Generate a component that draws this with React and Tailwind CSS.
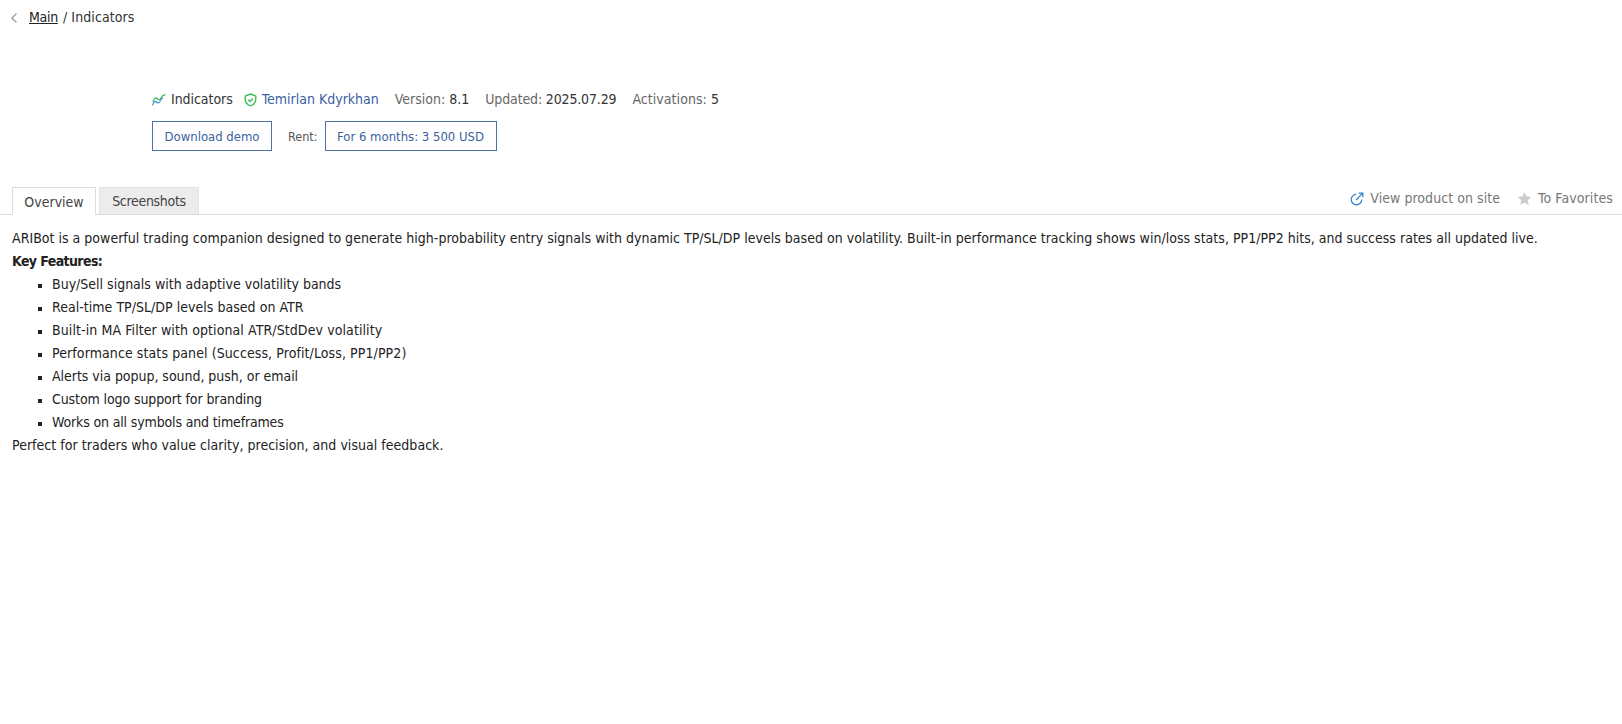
function Meta({ label, value, className }) {
  return (
    <span className={`text-[#666] ${className}`}>
      {label}: <span className="text-[#333]">{value}</span>
    </span>
  );
}

const features = [
  ["Buy/Sell signals with adaptive volatility bands", "tracking-[0px]"],
  ["Real-time TP/SL/DP levels based on ATR", "tracking-[0.03px]"],
  ["Built-in MA Filter with optional ATR/StdDev volatility", "tracking-[0.095px]"],
  ["Performance stats panel (Success, Profit/Loss, PP1/PP2)", "tracking-[0.095px]"],
  ["Alerts via popup, sound, push, or email", "tracking-[-0.03px]"],
  ["Custom logo support for branding", "tracking-[-0.1px]"],
  ["Works on all symbols and timeframes", "tracking-[-0.15px]"],
];

export default function App() {
  return (
    <div className="min-h-[724px] bg-white font-['DejaVu_Sans_Condensed','DejaVu_Sans',sans-serif] text-[14px] leading-[23px] text-[#222]">
      <nav className="flex h-[35px] items-center pl-[10px]">
        <svg width="8" height="12" viewBox="0 0 8 12" fill="none" stroke="#999" strokeWidth="1.2" className="mr-[11px]">
          <path d="M6.5 1.5 1.8 6l4.7 4.5" />
        </svg>
        <a className="tracking-[-0.3px] text-[#222] underline">Main</a>
        <span className="ml-[5px] tracking-[0.1px] text-[#333]">/ Indicators</span>
      </nav>

      <header className="pl-[152px] pt-[53px]">
        <div className="flex h-[23px] items-center">
          <svg width="14" height="12" viewBox="0 0 14 12" fill="none" strokeWidth="1.1" className="mr-[5px]">
            <path d="M0.5 11.5C1.5 8 3 6.5 4.5 8S7 9.5 8.5 6.5 10 3.5 11 4.5" stroke="#2f8fd0" />
            <path d="M1 8C2 4.5 3.5 3 5 4.5S7.5 6.5 9 4 11.5 0.5 13.5 1" stroke="#35b34a" />
          </svg>
          <span className="tracking-[-0.05px] text-[#333]">Indicators</span>
          <svg width="13" height="14" viewBox="0 0 13 14" fill="none" stroke="#3fbf57" strokeWidth="1.4" className="ml-[11px] mr-[5px]">
            <path d="M6.5 1 11.8 3v3.6c0 3.1-2.2 5.2-5.3 6.3C3.4 11.8 1.2 9.7 1.2 6.6V3L6.5 1Z" />
            <path d="m4.2 6.8 1.7 1.7 3-3" />
          </svg>
          <a className="text-[#3b5f9f]">Temirlan Kdyrkhan</a>
          <Meta label="Version" value="8.1" className="ml-[16px]" />
          <Meta label="Updated" value="2025.07.29" className="ml-[16px] tracking-[-0.15px]" />
          <Meta label="Activations" value="5" className="ml-[16px] tracking-[0.05px]" />
        </div>
        <div className="mt-[10px] flex items-center">
          <a className="flex h-[30px] w-[120px] items-center justify-center border border-[#4f72ab] text-[13px] text-[#3b5f9f]">Download demo</a>
          <span className="ml-[16px] mr-[7px] text-[12.5px] text-[#555]">Rent:</span>
          <a className="flex h-[30px] w-[172px] items-center justify-center border border-[#4f72ab] text-[13px] text-[#3b5f9f]">For 6 months: 3 500 USD</a>
        </div>
      </header>

      <div className="mt-[36px] flex h-[28px] items-end justify-between border-b border-[#ddd] pl-[12px] pr-[9px]">
        <div className="flex items-end">
          <div className="relative -mb-px h-[28px] w-[84px] border border-b-0 border-[#ddd] bg-white text-center leading-[28px] text-[#444]">Overview</div>
          <div className="ml-[3px] h-[27px] w-[100px] border border-b-0 border-[#e4e4e4] bg-[#ececec] text-center leading-[27px] tracking-[-0.3px] text-[#444]">Screenshots</div>
        </div>
        <div className="mb-[4px] flex items-center text-[#777]">
          <svg width="14" height="14" viewBox="0 0 14 14" fill="none" stroke="#2f83c9" strokeWidth="1.2" className="mr-[6px]">
            <path d="M11.8 7.6A5.3 5.3 0 1 1 6.4 2.2" />
            <path d="M8.7 1.2h4.1v4.1M12.6 1.4 6 8" />
          </svg>
          <span className="tracking-[0.05px]">View product on site</span>
          <svg width="15" height="15" viewBox="0 0 24 24" fill="#ccc" className="ml-[17px] mr-[6px]">
            <path d="m12 1.5 3.2 7 7.6.9-5.6 5.2 1.5 7.6L12 18.4l-6.7 3.8 1.5-7.6L1.2 9.4l7.6-.9L12 1.5Z" />
          </svg>
          <span className="tracking-[0.1px]">To Favorites</span>
        </div>
      </div>

      <main className="px-[12px] pt-[12px] text-[#222]">
        <p className="tracking-[0.017px]">ARIBot is a powerful trading companion designed to generate high-probability entry signals with dynamic TP/SL/DP levels based on volatility. Built-in performance tracking shows win/loss stats, PP1/PP2 hits, and success rates all updated live.</p>
        <p className="font-bold tracking-[-0.6px]">Key Features:</p>
        <ul className="list-[square] pl-[40px] marker:text-[12px]">
          {features.map(([f, t]) => (
            <li key={f} className={t}>{f}</li>
          ))}
        </ul>
        <p className="tracking-[0.03px]">Perfect for traders who value clarity, precision, and visual feedback.</p>
      </main>
    </div>
  );
}
